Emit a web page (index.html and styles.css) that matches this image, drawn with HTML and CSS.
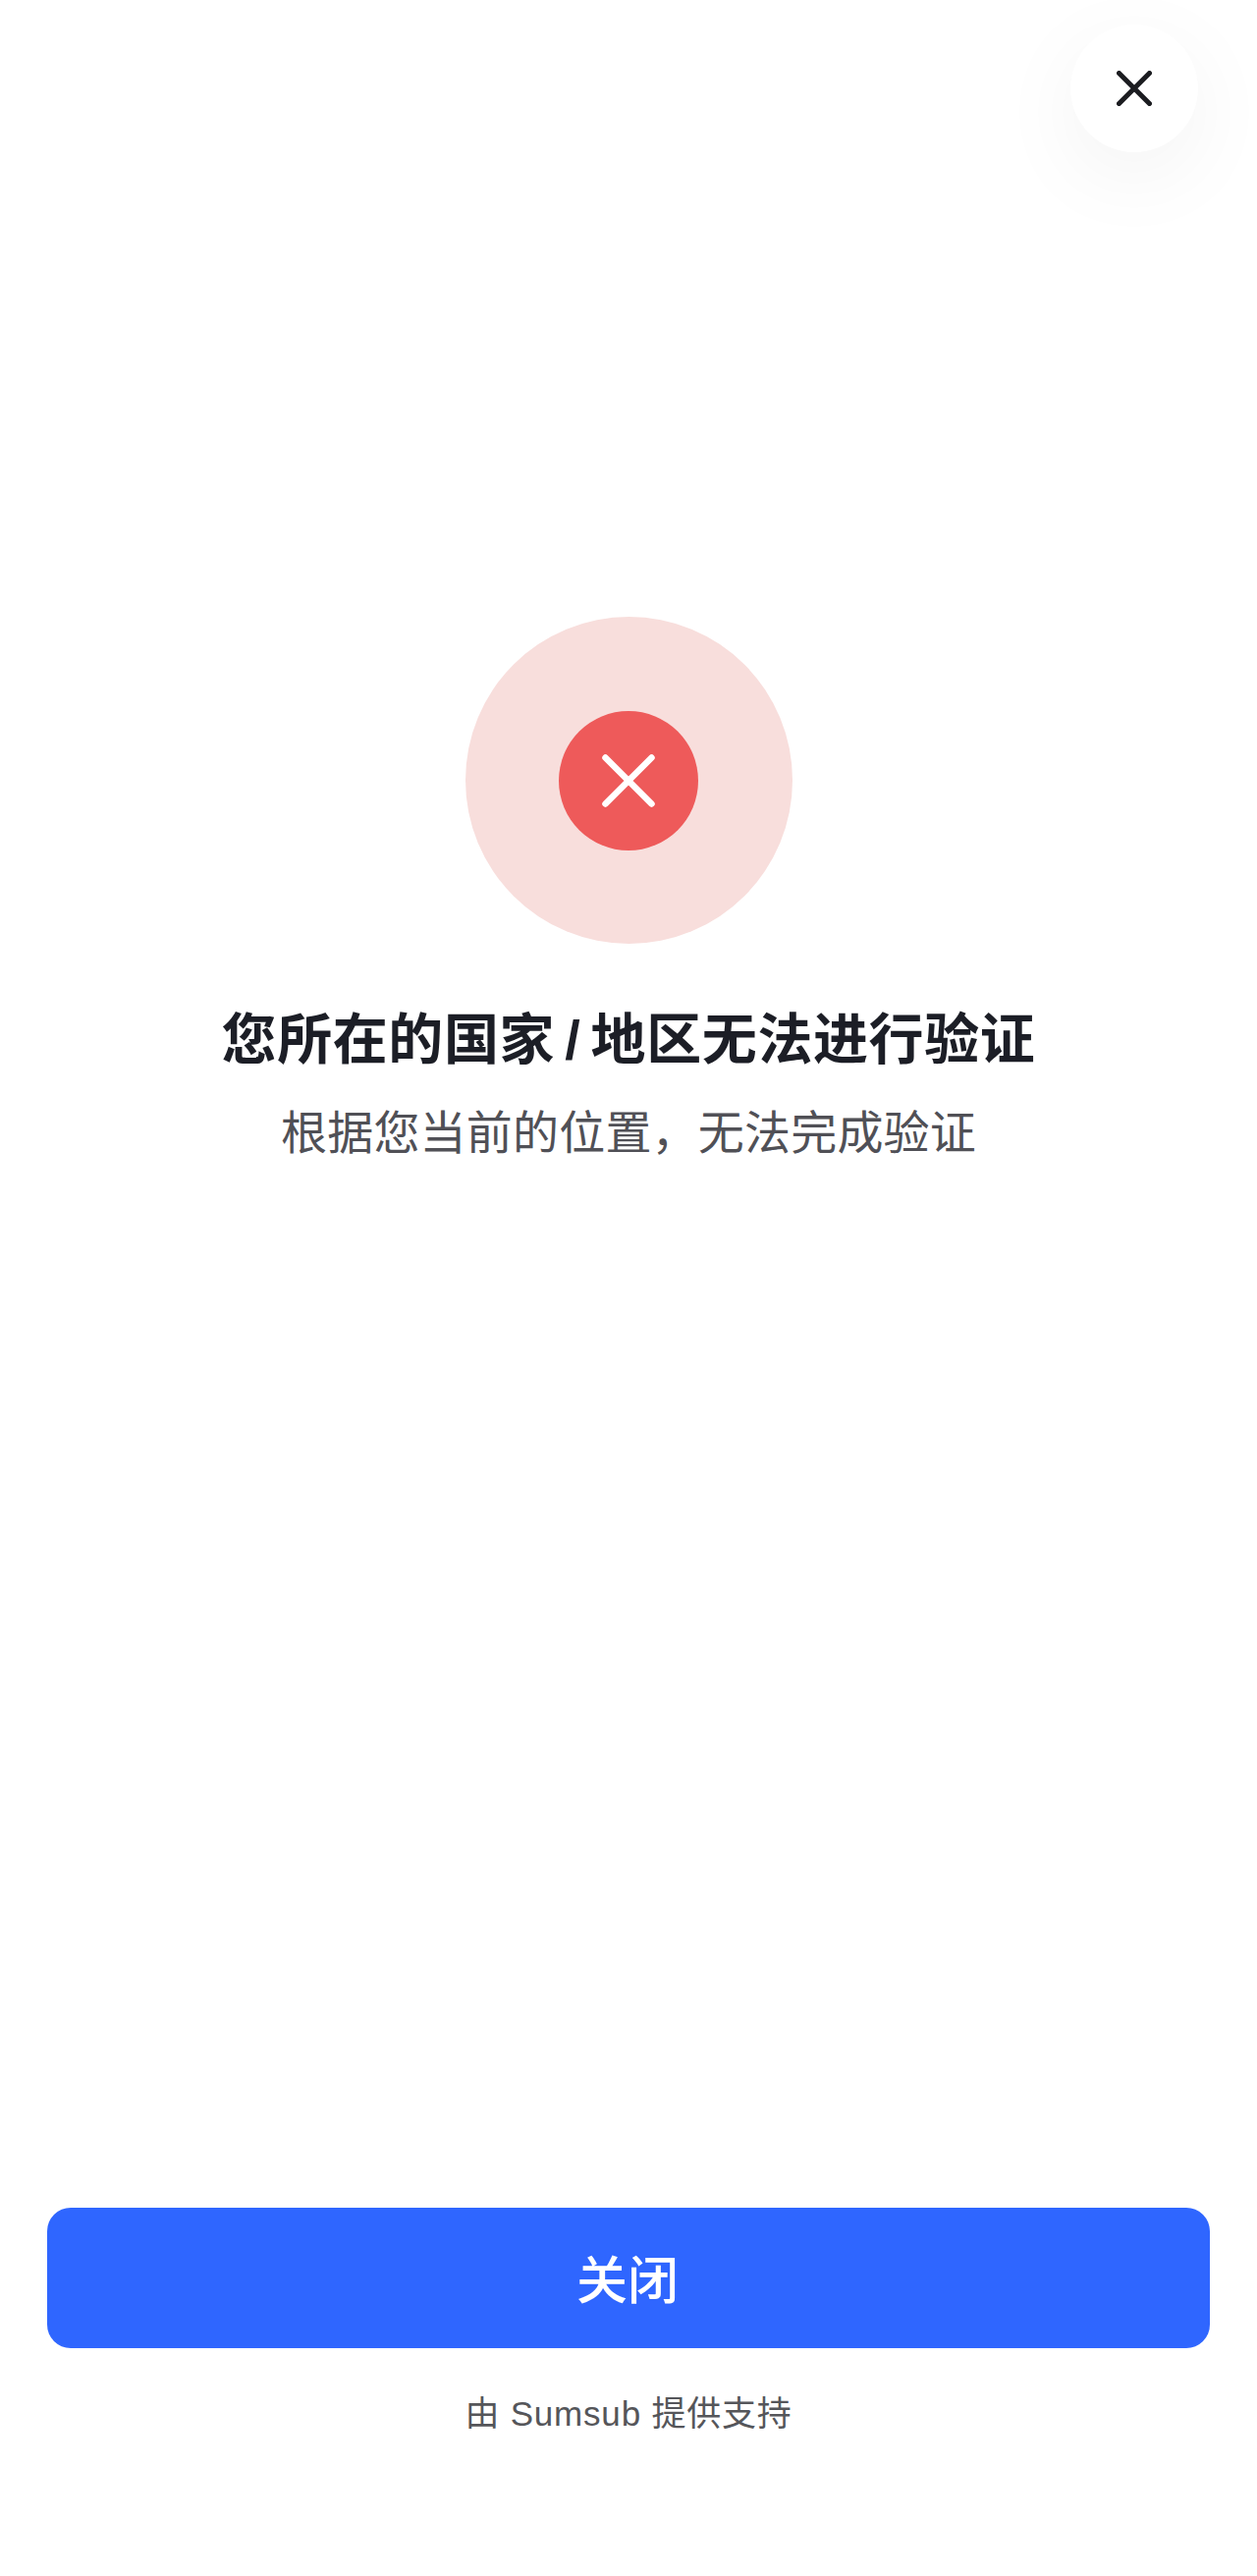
FILE: index.html
```html
<!DOCTYPE html>
<html lang="zh-CN">
<head>
    <meta charset="UTF-8">
    <meta name="viewport" content="width=device-width, initial-scale=1.0">
    <title>无法进行验证</title>
    <link rel="stylesheet" href="styles.css">
</head>
<body>
    <div class="page">
        <div class="topbar">
            <button class="close-btn" type="button" aria-label="关闭">
                <svg class="close-icon" viewBox="0 0 36 36" fill="none" stroke="#1b1c20" stroke-width="5" stroke-linecap="round">
                    <path d="M2.5 2.5L33.5 33.5M33.5 2.5L2.5 33.5"/>
                </svg>
            </button>
        </div>
        <main class="result">
            <div class="status-ring">
                <div class="status-dot">
                    <svg class="status-icon" viewBox="0 0 54 54" fill="none" stroke="#fff" stroke-width="6.5" stroke-linecap="round">
                        <path d="M3.5 3.5L50.5 50.5M50.5 3.5L3.5 50.5"/>
                    </svg>
                </div>
            </div>
            <h1 class="title">您所在的国家 / 地区无法进行验证</h1>
            <p class="subtitle">根据您当前的位置，无法完成验证</p>
        </main>
        <div class="actions">
            <button class="primary-btn" type="button">关闭</button>
            <p class="powered">由 Sumsub 提供支持</p>
        </div>
    </div>
</body>
</html>
```

FILE: styles.css
```css
body {
    margin: 0;
    background: #fff;
    font-family: "Noto Sans CJK SC", "Liberation Sans", sans-serif;
}
.page {
    display: flex;
    flex-direction: column;
    height: 2623px;
    overflow: hidden;
}
.topbar {
    display: flex;
    justify-content: flex-end;
    padding: 25px 60px 0 0;
}
.close-btn {
    display: flex;
    align-items: center;
    justify-content: center;
    width: 130px;
    height: 130px;
    padding: 0;
    border: none;
    border-radius: 50%;
    background: #fff;
    box-shadow: 0 24px 90px rgba(0, 0, 0, .05);
}
.close-icon {
    width: 36px;
    height: 36px;
}
.result {
    display: flex;
    flex: 1;
    flex-direction: column;
    align-items: center;
    padding-top: 473px;
}
.status-ring {
    display: flex;
    align-items: center;
    justify-content: center;
    width: 333px;
    height: 333px;
    border-radius: 50%;
    background: #f8dedc;
}
.status-dot {
    display: flex;
    align-items: center;
    justify-content: center;
    width: 142px;
    height: 142px;
    border-radius: 50%;
    background: #ee5a5a;
}
.status-icon {
    width: 54px;
    height: 54px;
}
.title {
    margin: 65px 0 0;
    color: #1c1e26;
    font-family: "Liberation Sans", "Noto Sans CJK SC", sans-serif;
    font-size: 56px;
    font-weight: 700;
    line-height: 66px;
    letter-spacing: .6px;
    word-spacing: -6px;
}
.subtitle {
    margin: 28px 0 0;
    color: #505056;
    font-size: 47px;
    line-height: 60px;
    letter-spacing: .2px;
}
.actions {
    display: flex;
    flex-direction: column;
    padding: 0 48px 141px;
}
.primary-btn {
    height: 143px;
    padding: 0 2px 3px 0;
    border: none;
    border-radius: 24px;
    background: #2f66ff;
    color: #fff;
    font-family: inherit;
    font-size: 52px;
    font-weight: 500;
}
.powered {
    margin: 43px 0 0;
    color: #55565a;
    font-family: "Liberation Sans", "Noto Sans CJK SC", sans-serif;
    font-size: 35px;
    line-height: 48px;
    letter-spacing: .8px;
    text-align: center;
}
```
